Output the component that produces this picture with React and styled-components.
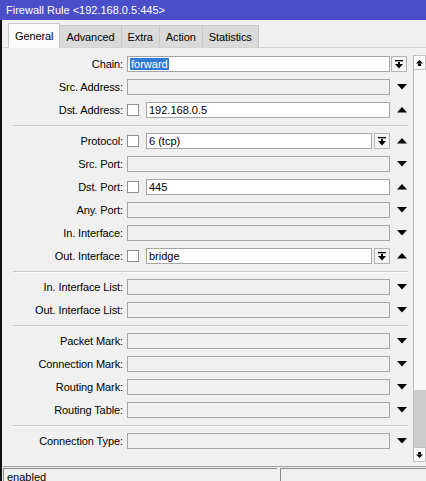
import React from "react"
import styled, { createGlobalStyle } from "styled-components"

const GlobalStyle = createGlobalStyle`
  html, body {
    margin: 0;
    padding: 0;
    background: #f0f0f0;
  }
  body {
    font-family: "Liberation Sans", Arial, sans-serif;
    font-size: 11px;
    color: #000;
  }
`

const Window = styled.div`
  width: 426px;
  height: 481px;
  display: flex;
  flex-direction: column;
  overflow: hidden;
  background: #f0f0f0;
`

const TitleBar = styled.div`
  height: 20px;
  flex: none;
  background: #4a4ec8;
  color: #fff;
  font-size: 11px;
  line-height: 20px;
  padding-left: 6px;
  white-space: nowrap;
`

const Frame = styled.div`
  flex: 1;
  display: flex;
  flex-direction: column;
  border-left: 2px solid #111;
  padding-left: 1px;
  min-height: 0;
`

const TabBar = styled.div`
  height: 27px;
  flex: none;
  display: flex;
  align-items: flex-end;
  padding-left: 6px;
  border-bottom: 1px solid #d4d4d4;
`

const Tab = styled.div`
  height: ${(p) => (p.$active ? "25px" : "22px")};
  line-height: ${(p) => (p.$active ? "24px" : "22px")};
  padding: 0 ${(p) => (p.$active ? "6px" : "6px")};
  background: ${(p) => (p.$active ? "#fbfbfb" : "#dadada")};
  border: 1px solid #c8c8c8;
  border-bottom: ${(p) => (p.$active ? "1px solid #fbfbfb" : "none")};
  margin-bottom: ${(p) => (p.$active ? "-1px" : "0")};
  margin-left: -1px;
  box-sizing: border-box;
  white-space: nowrap;
  letter-spacing: -0.1px;
  position: relative;
  z-index: ${(p) => (p.$active ? 1 : 0)};
`

const Panel = styled.div`
  flex: 1;
  display: flex;
  min-height: 0;
`

const Form = styled.div`
  flex: 1;
  display: flex;
  flex-direction: column;
  gap: 7px;
  padding-top: 8px;
`

const Row = styled.div`
  display: flex;
  align-items: center;
  height: 16px;
`

const Label = styled.div`
  width: 120px;
  margin-right: 4px;
  text-align: right;
  white-space: nowrap;
  letter-spacing: -0.1px;
`

const FieldArea = styled.div`
  width: 263px;
  height: 16px;
  display: flex;
  align-items: center;
  gap: 2px;
`

const Check = styled.div`
  width: 12px;
  height: 12px;
  flex: none;
  box-sizing: border-box;
  border: 1px solid #8f8f8f;
  background: #fff;
  margin-right: 5px;
`

const Input = styled.div`
  flex: 1;
  height: 16px;
  box-sizing: border-box;
  border: 1px solid #a6a6a6;
  background: ${(p) => (p.$filled ? "#fff" : "#f0f0f0")};
  padding-left: 2px;
  line-height: 14px;
  white-space: nowrap;
  overflow: hidden;
`

const Selected = styled.span`
  background: #2f7bd6;
  color: #fff;
  padding: 0 1px;
`

const DropButton = styled.div`
  width: 16px;
  height: 16px;
  flex: none;
  box-sizing: border-box;
  border: 1px solid #b4b4b4;
  background: #f4f4f4;
  display: flex;
  align-items: center;
  justify-content: center;
  margin-left: ${(p) => (p.$tail ? "1px" : "0")};
`

const Tail = styled.div`
  width: 23px;
  height: 16px;
  display: flex;
  align-items: center;
  justify-content: ${(p) => (p.$start ? "flex-start" : "center")};
`

const Separator = styled.div`
  height: 1px;
  background: #c9c9c9;
  margin: 0 5px 0 10px;
  box-shadow: 0 1px 0 #fafafa;
`

const Scrollbar = styled.div`
  width: 13px;
  flex: none;
  margin: 7px 0 4px;
  display: flex;
  flex-direction: column;
  border-left: 1px solid #b9b9b9;
  background: #f7f7f7;
  box-sizing: border-box;
`

const ScrollButton = styled.div`
  height: 15px;
  flex: none;
  box-sizing: border-box;
  border: 1px solid #c4c4c4;
  border-left: none;
  background: #fdfdfd;
  display: flex;
  align-items: center;
  justify-content: center;
`

const Track = styled.div`
  flex: 1;
  display: flex;
  flex-direction: column;
  justify-content: flex-end;
`

const Thumb = styled.div`
  height: 57px;
  background: #cdcdcd;
`

const StatusBar = styled.div`
  height: 15px;
  flex: none;
  display: flex;
  gap: 3px;
  border-top: 1px solid #a0a0a0;
  padding-top: 1px;
  box-sizing: border-box;
`

const StatusBox = styled.div`
  width: ${(p) => p.$width};
  flex: ${(p) => (p.$width ? "none" : "1")};
  border-left: 1px solid #8a8a8a;
  border-top: 1px solid #8a8a8a;
  padding: 2px 0 0 3px;
  line-height: 12px;
  white-space: nowrap;
`

const Down = () => (
  <svg width="10" height="6" viewBox="0 0 10 6">
    <polygon points="0,0 10,0 5,5.5" fill="#000" />
  </svg>
)

const Up = () => (
  <svg width="10" height="6" viewBox="0 0 10 6">
    <polygon points="0,5.5 10,5.5 5,0" fill="#000" />
  </svg>
)

const DropIcon = () => (
  <svg width="8" height="9" viewBox="0 0 8 9">
    <rect x="0" y="0" width="8" height="1.3" fill="#000" />
    <rect x="3" y="2" width="2" height="2" fill="#000" />
    <polygon points="0,4 8,4 4,8.5" fill="#000" />
  </svg>
)

const ScrollArrow = ({ dir }) => (
  <svg width="7" height="6" viewBox="0 0 7 6">
    {dir === "up" ? (
      <>
        <polygon points="0,3.5 7,3.5 3.5,0" fill="#000" />
        <rect x="2" y="3.5" width="3" height="2.5" fill="#000" />
      </>
    ) : (
      <>
        <rect x="2" y="0" width="3" height="2.5" fill="#000" />
        <polygon points="0,2.5 7,2.5 3.5,6" fill="#000" />
      </>
    )}
  </svg>
)

const fields = [
  { label: "Chain", value: "forward", select: true, tailButton: true },
  { label: "Src. Address", arrow: "down" },
  { label: "Dst. Address", value: "192.168.0.5", check: true, arrow: "up" },
  "sep",
  { label: "Protocol", value: "6 (tcp)", check: true, drop: true, arrow: "up" },
  { label: "Src. Port", arrow: "down" },
  { label: "Dst. Port", value: "445", check: true, arrow: "up" },
  { label: "Any. Port", arrow: "down" },
  { label: "In. Interface", arrow: "down" },
  { label: "Out. Interface", value: "bridge", check: true, drop: true, arrow: "up" },
  "sep",
  { label: "In. Interface List", arrow: "down" },
  { label: "Out. Interface List", arrow: "down" },
  "sep",
  { label: "Packet Mark", arrow: "down" },
  { label: "Connection Mark", arrow: "down" },
  { label: "Routing Mark", arrow: "down" },
  { label: "Routing Table", arrow: "down" },
  "sep",
  { label: "Connection Type", arrow: "down" },
]

const tabs = ["General", "Advanced", "Extra", "Action", "Statistics"]

const FieldRow = ({ f }) => (
  <Row>
    <Label>{f.label}:</Label>
    <FieldArea>
      {f.check && <Check />}
      <Input $filled={!!f.value}>
        {f.select ? <Selected>{f.value}</Selected> : f.value}
      </Input>
      {f.drop && (
        <DropButton>
          <DropIcon />
        </DropButton>
      )}
    </FieldArea>
    <Tail $start={f.tailButton}>
      {f.tailButton && (
        <DropButton $tail>
          <DropIcon />
        </DropButton>
      )}
      {f.arrow === "down" && <Down />}
      {f.arrow === "up" && <Up />}
    </Tail>
  </Row>
)

export default function App() {
  return (
    <Window>
      <GlobalStyle />
      <TitleBar>Firewall Rule &lt;192.168.0.5:445&gt;</TitleBar>
      <Frame>
        <TabBar>
          {tabs.map((t, i) => (
            <Tab key={t} $active={i === 0}>
              {t}
            </Tab>
          ))}
        </TabBar>
        <Panel>
          <Form>
            {fields.map((f, i) =>
              f === "sep" ? <Separator key={i} /> : <FieldRow key={i} f={f} />
            )}
          </Form>
          <Scrollbar>
            <ScrollButton>
              <ScrollArrow dir="up" />
            </ScrollButton>
            <Track>
              <Thumb />
            </Track>
            <ScrollButton>
              <ScrollArrow dir="down" />
            </ScrollButton>
          </Scrollbar>
        </Panel>
        <StatusBar>
          <StatusBox $width="270px">enabled</StatusBox>
          <StatusBox />
        </StatusBar>
      </Frame>
    </Window>
  )
}
